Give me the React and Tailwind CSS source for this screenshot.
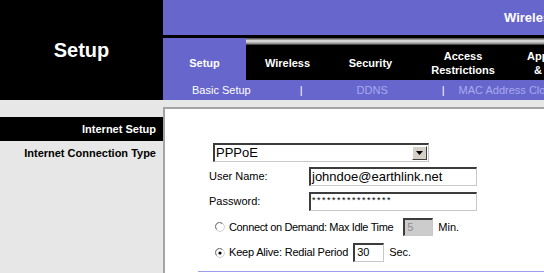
const tabs = [
  { label: ["Setup"], width: "w-[83px]", active: true },
  { label: ["Wireless"], width: "w-[83px]" },
  { label: ["Security"], width: "w-[83px]" },
  { label: ["Access", "Restrictions"], width: "w-[102px]" },
  { label: ["Applications", "& Gaming"], width: "w-[92px]" },
];

const Radio = ({ checked }) => (
  <svg width="10" height="10" viewBox="0 0 10 10" className="shrink-0">
    <circle cx="5" cy="5" r="4.4" fill="#fff" stroke="#c8c8c8" strokeWidth="0.9" />
    <path d="M1.6 7.4 A4 4 0 0 1 7.4 1.6" fill="none" stroke="#6e6e6e" strokeWidth="1" />
    {checked && <circle cx="5" cy="5" r="1.6" fill="#000" />}
  </svg>
);

const inputBorder =
  "border-solid border-t-2 border-l-2 border-b border-r border-t-[#3c3c3c] border-l-[#3c3c3c] border-b-[#c8c8c8] border-r-[#c8c8c8]";

const App = () => {
  return (
    <div className="w-[544px] h-[273px] overflow-hidden bg-[#e7e7e7] font-[Liberation_Sans,Arial,sans-serif]">
      {/* header */}
      <div className="flex h-[100px]">
        <div className="w-[163px] shrink-0 bg-black flex items-center justify-center pb-[1px]">
          <h1 className="text-white font-bold text-[20px] leading-none">Setup</h1>
        </div>
        <div className="flex-1 flex flex-col overflow-hidden">
          <div className="h-[35px] bg-[#6666cc] flex items-center pl-[341px] whitespace-nowrap">
            <span className="text-white font-bold text-[13px]">Wireless-G Broadband Router</span>
          </div>
          <div className="h-[3px] bg-black" />
          <div className="h-[42px] flex">
            {tabs.map((tab) =>
              tab.active ? (
                <div
                  key={tab.label[0]}
                  className={`${tab.width} shrink-0 bg-[#6666cc] flex items-center justify-center pt-[7px]`}
                >
                  <span className="text-white font-bold text-[11px] leading-[14px]">{tab.label[0]}</span>
                </div>
              ) : (
                <div key={tab.label[0]} className={`${tab.width} shrink-0 flex flex-col`}>
                  <div className="h-[7px] bg-[linear-gradient(to_bottom,#3c3c3c,#e6e6e6_40%,#a0a0a0_75%,#2a2a2a)]" />
                  <div className="flex-1 bg-black flex flex-col items-center justify-center text-white font-bold text-[11px] leading-[14px] whitespace-nowrap">
                    {tab.label.map((line) => (
                      <span key={line}>{line}</span>
                    ))}
                  </div>
                </div>
              )
            )}
          </div>
          <div className="h-[20px] bg-[#6666cc] flex items-center pl-[29px] text-[11px] whitespace-nowrap">
            <span className="text-white">Basic Setup</span>
            <span className="text-white ml-[49px]">|</span>
            <span className="text-[#a9a9ee] ml-[54px]">DDNS</span>
            <span className="text-white ml-[54px]">|</span>
            <span className="text-[#a9a9ee] ml-[14px]">MAC Address Clone</span>
          </div>
        </div>
      </div>

      {/* body */}
      <div className="flex">
        <div className="w-[163px] shrink-0 pt-[17px]">
          <div className="h-[24px] bg-black flex items-center justify-end pr-[7px]">
            <span className="text-white font-bold text-[11px]">Internet Setup</span>
          </div>
          <div className="h-[24px] flex items-center justify-end pr-[7px]">
            <span className="text-black font-bold text-[11px] whitespace-nowrap">Internet Connection Type</span>
          </div>
        </div>

        <div className="flex-1 mt-[7px] bg-white border-t-2 border-l-2 border-solid border-[#a4a4a4] h-[170px] pt-[34px] text-[11px] text-black">
          <div className="ml-[48px] w-[216px] h-[19px] flex items-stretch border-solid border-t-2 border-l-2 border-b border-r border-t-[#3c3c3c] border-l-[#3c3c3c] border-b-[#c8c8c8] border-r-[#c8c8c8]">
            <span className="flex-1 text-[13px] leading-[16px] pl-[1px]">PPPoE</span>
            <div className="w-[15px] m-[1px] bg-[#d4d0c8] border border-solid border-t-white border-l-white border-b-[#404040] border-r-[#404040] flex items-center justify-center">
              <svg width="7" height="4" viewBox="0 0 7 4">
                <path d="M0 0H7L3.5 4Z" fill="#000" />
              </svg>
            </div>
          </div>

          <div className="flex items-center mt-[5px] ml-[44px] h-[19px]">
            <span className="w-[100px]">User Name:</span>
            <div className={`w-[168px] h-[19px] ${inputBorder} text-[13px] leading-[15px] pl-[1px]`}>
              johndoe@earthlink.net
            </div>
          </div>

          <div className="flex items-center mt-[6px] ml-[44px] h-[19px]">
            <span className="w-[100px]">Password:</span>
            <div className={`w-[168px] h-[19px] ${inputBorder} text-[9px] leading-none pt-[2px] pl-[1px] tracking-[1.5px]`}>
              ****************
            </div>
          </div>

          <div className="flex items-center mt-[7px] ml-[50px] h-[18px]">
            <Radio />
            <span className="ml-[4px] tracking-[-0.35px]">Connect on Demand: Max Idle Time</span>
            <div className={`ml-[10px] w-[30px] h-[18px] bg-[#cccccc] ${inputBorder} text-[#8c8c8c] leading-[14px] pl-[2px]`}>
              5
            </div>
            <span className="ml-[5px]">Min.</span>
          </div>

          <div className="flex items-center mt-[7px] ml-[50px] h-[19px]">
            <Radio checked />
            <span className="ml-[4px] tracking-[-0.2px]">Keep Alive: Redial Period</span>
            <div className={`ml-[5px] w-[31px] h-[19px] ${inputBorder} leading-[15px] pl-[2px]`}>30</div>
            <span className="ml-[5px]">Sec.</span>
          </div>

          <div className="ml-[33px] mt-[9px] h-[1px] bg-[#9c9cf0]" />
        </div>
      </div>
    </div>
  );
};

export default App;
